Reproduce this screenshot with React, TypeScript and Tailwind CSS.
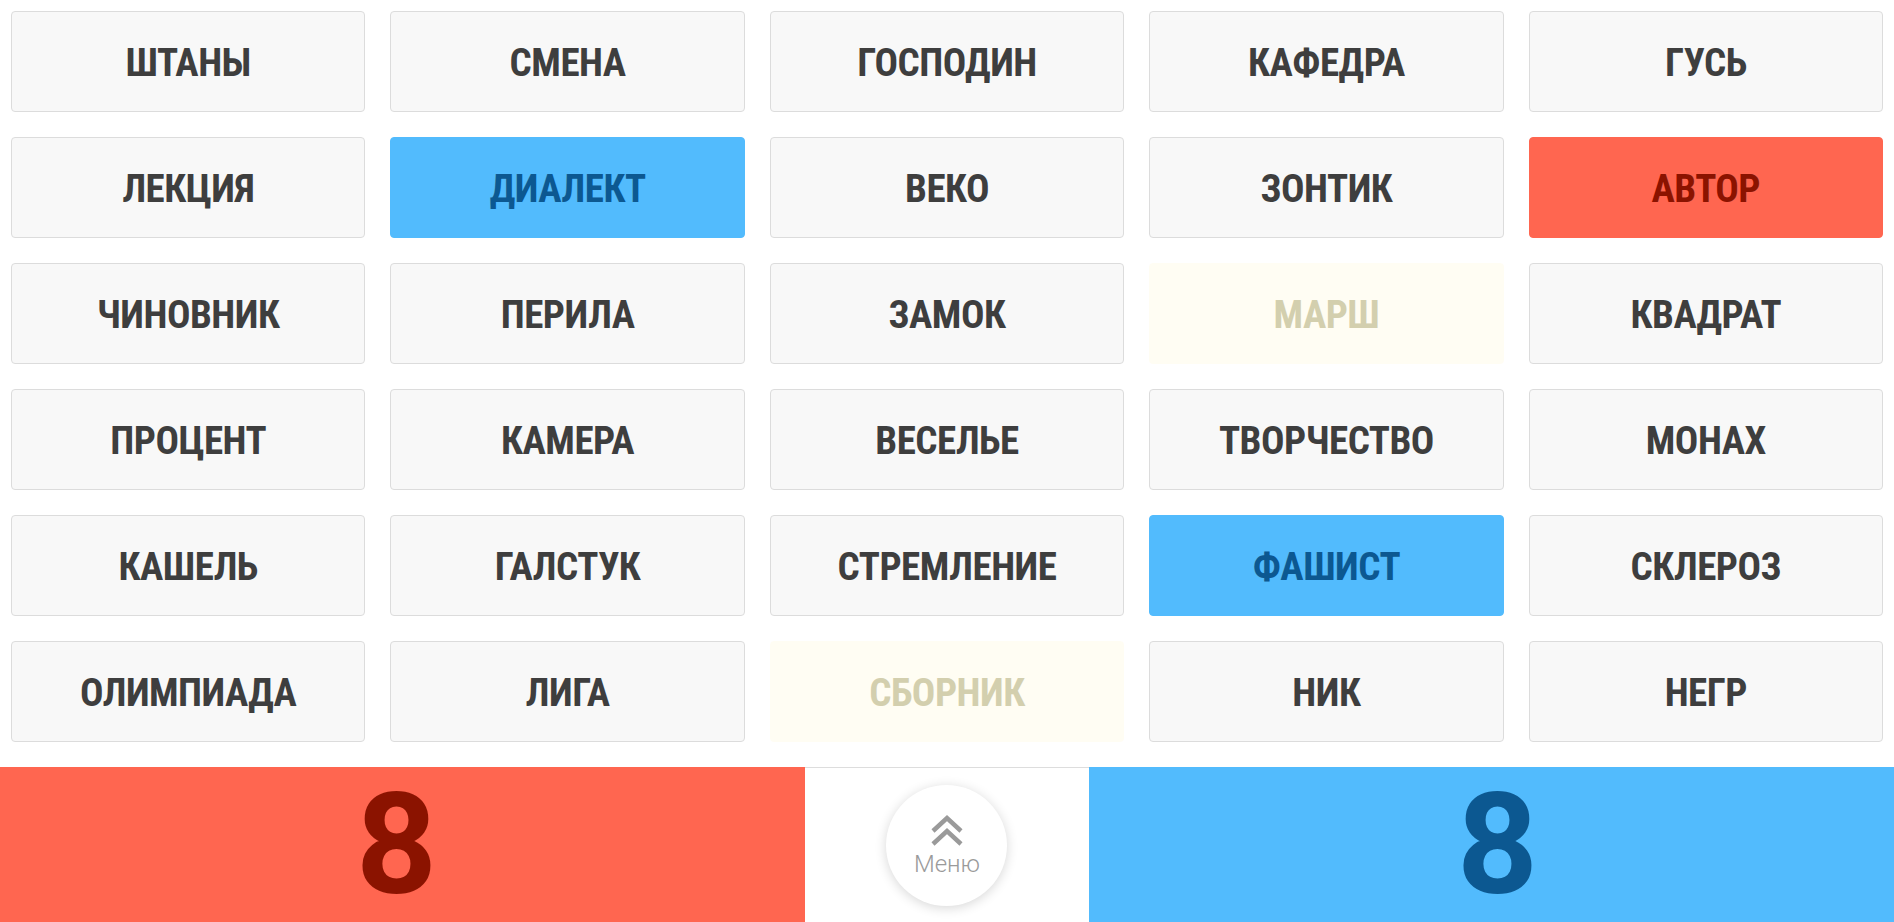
const words: [string, 'n' | 'b' | 'r' | 'y'][] = [
  ['ШТАНЫ', 'n'], ['СМЕНА', 'n'], ['ГОСПОДИН', 'n'], ['КАФЕДРА', 'n'], ['ГУСЬ', 'n'],
  ['ЛЕКЦИЯ', 'n'], ['ДИАЛЕКТ', 'b'], ['ВЕКО', 'n'], ['ЗОНТИК', 'n'], ['АВТОР', 'r'],
  ['ЧИНОВНИК', 'n'], ['ПЕРИЛА', 'n'], ['ЗАМОК', 'n'], ['МАРШ', 'y'], ['КВАДРАТ', 'n'],
  ['ПРОЦЕНТ', 'n'], ['КАМЕРА', 'n'], ['ВЕСЕЛЬЕ', 'n'], ['ТВОРЧЕСТВО', 'n'], ['МОНАХ', 'n'],
  ['КАШЕЛЬ', 'n'], ['ГАЛСТУК', 'n'], ['СТРЕМЛЕНИЕ', 'n'], ['ФАШИСТ', 'b'], ['СКЛЕРОЗ', 'n'],
  ['ОЛИМПИАДА', 'n'], ['ЛИГА', 'n'], ['СБОРНИК', 'y'], ['НИК', 'n'], ['НЕГР', 'n'],
];

const cardStyles = {
  n: 'bg-[#f8f8f8] border border-[#dcdcdc] text-[#3e3e3e]',
  b: 'bg-[#52bbfd] border border-[#52bbfd] text-[#0c5891]',
  r: 'bg-[#ff6650] border border-[#ff6650] text-[#8b1300]',
  y: 'bg-[#fffdf3] border border-[#fffdf3] text-[#d3cfae]',
};

function Card({ word, kind }: { word: string; kind: 'n' | 'b' | 'r' | 'y' }) {
  return (
    <div
      className={`flex items-center justify-center rounded-[4px] pt-[4px] text-[39px] font-bold uppercase tracking-[-0.5px] ${cardStyles[kind]}`}
    >
      {word}
    </div>
  );
}

function MenuButton() {
  return (
    <button className="flex h-[121px] w-[121px] flex-col items-center justify-center rounded-full bg-white shadow-[0_2px_12px_rgba(0,0,0,0.16)]">
      <svg width="36" height="32" viewBox="0 0 36 32" fill="none" stroke="#9a9a9a" strokeWidth="4.5">
        <polyline points="4,17 18,4 32,17" />
        <polyline points="4,30 18,17 32,30" />
      </svg>
      <span className="mt-[6px] font-['Roboto',sans-serif] text-[24px] leading-none font-light text-[#9a9a9a]">
        Меню
      </span>
    </button>
  );
}

function Score({ value, className }: { value: number; className: string }) {
  return (
    <div
      className={`flex w-[42.5%] items-center justify-center font-['Roboto',sans-serif] text-[141px] leading-none font-bold ${className}`}
    >
      {value}
    </div>
  );
}

export default function App() {
  return (
    <div className="flex h-screen flex-col bg-white font-['Roboto_Condensed','Roboto',sans-serif]">
      <div className="grid grid-cols-5 grid-rows-[repeat(6,101px)] gap-[25px] px-[11px] pt-[11px] pb-[25px]">
        {words.map(([w, k]) => (
          <Card key={w} word={w} kind={k} />
        ))}
      </div>
      <div className="flex h-[155px]">
        <Score value={8} className="bg-[#ff6650] pr-[12px] text-[#8b1300]" />
        <div className="flex w-[15%] items-center justify-center border-t border-[#dddddd] bg-white">
          <MenuButton />
        </div>
        <Score value={8} className="bg-[#52bbfd] pl-[12px] text-[#0c5891]" />
      </div>
    </div>
  );
}
